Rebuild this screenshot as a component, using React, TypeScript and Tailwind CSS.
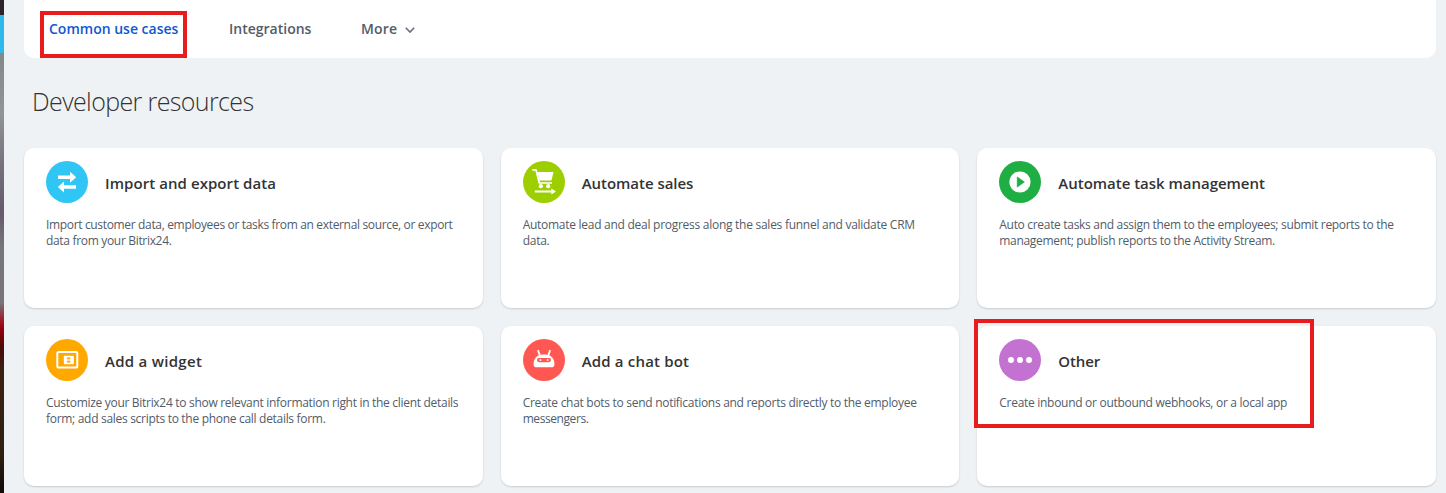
import type { ReactNode } from 'react';

type Card = {
  title: string;
  titleClass: string;
  lines: { text: string; className: string }[];
  color: string;
  icon: ReactNode;
  highlighted?: boolean;
};

const cards: Card[] = [
  {
    title: 'Import and export data',
    titleClass: 'tracking-[0.07px]',
    lines: [
      { text: 'Import customer data, employees or tasks from an external source, or export', className: 'tracking-[-0.34px]' },
      { text: 'data from your Bitrix24.', className: 'tracking-[-0.32px]' },
    ],
    color: 'bg-[#2fc6f6]',
    icon: (
      <path
        fill="#fff"
        d="M12 14.4H24V10.7L30.2 16.2L24 21.7V18H12ZM30 24.2H18V20.4L11.8 25.9L18 31.5V27.7H30Z"
      />
    ),
  },
  {
    title: 'Automate sales',
    titleClass: 'tracking-[-0.03px]',
    lines: [
      { text: 'Automate lead and deal progress along the sales funnel and validate CRM', className: 'tracking-[-0.27px]' },
      { text: 'data.', className: 'tracking-[-0.27px]' },
    ],
    color: 'bg-[#9dcf00]',
    icon: (
      <>
        <path d="M9.3 8.8H13L16.3 22H29" fill="none" stroke="#fff" strokeWidth="1.7" strokeLinejoin="round" />
        <path d="M14.3 11H30.6L28.4 19.6H16.4Z" fill="#fff" />
        <circle cx="17.8" cy="25.2" r="2.1" fill="#fff" />
        <circle cx="25.2" cy="25.2" r="2.1" fill="#fff" />
        <path d="M11.8 29.4H28.3V27.4L33 30.4L28.3 33.4V31.4H11.8Z" fill="#fff" />
      </>
    ),
  },
  {
    title: 'Automate task management',
    titleClass: 'tracking-[-0.02px]',
    lines: [
      { text: 'Auto create tasks and assign them to the employees; submit reports to the', className: 'tracking-[-0.31px]' },
      { text: 'management; publish reports to the Activity Stream.', className: 'tracking-[-0.32px]' },
    ],
    color: 'bg-[#1fae43]',
    icon: (
      <>
        <circle cx="21" cy="21" r="10.6" fill="#fff" />
        <path d="M18.3 16L25.3 21L18.3 26Z" fill="#1fae43" stroke="#1fae43" strokeWidth="0.8" strokeLinejoin="round" />
      </>
    ),
  },
  {
    title: 'Add a widget',
    titleClass: 'tracking-[0.28px]',
    lines: [
      { text: 'Customize your Bitrix24 to show relevant information right in the client details', className: 'tracking-[-0.3px]' },
      { text: 'form; add sales scripts to the phone call details form.', className: 'tracking-[-0.3px]' },
    ],
    color: 'bg-[#ffa900]',
    icon: (
      <>
        <rect x="11.3" y="13" width="20" height="15.6" rx="1.6" fill="none" stroke="#fff" strokeWidth="2" />
        <rect x="17.8" y="16.8" width="10" height="8.4" rx="0.8" fill="#fff" />
        <path d="M20.8 18.6H24.4V20.2H20.8ZM20.8 21.8H24.4V23.4H20.8Z" fill="#ffa900" />
      </>
    ),
  },
  {
    title: 'Add a chat bot',
    titleClass: 'tracking-[0.18px]',
    lines: [
      { text: 'Create chat bots to send notifications and reports directly to the employee', className: 'tracking-[-0.29px]' },
      { text: 'messengers.', className: 'tracking-[-0.42px]' },
    ],
    color: 'bg-[#ff5752]',
    icon: (
      <>
        <path d="M15.2 11.8L17 17M26.9 11.8L25.1 17" stroke="#fff" strokeWidth="1.9" strokeLinecap="round" />
        <path d="M21 15.4C26.6 15.4 29.6 17.4 30.9 21.6C31.8 24.6 31.8 28.2 29.4 28.2H12.6C10.2 28.2 10.2 24.6 11.1 21.6C12.4 17.4 15.4 15.4 21 15.4Z" fill="#fff" />
        <rect x="14" y="19" width="14" height="4.2" rx="2.1" fill="#ff5752" />
        <circle cx="17.4" cy="21.1" r="1" fill="#fff" />
        <circle cx="24.6" cy="21.1" r="1" fill="#fff" />
      </>
    ),
  },
  {
    title: 'Other',
    titleClass: 'tracking-[-0.1px]',
    lines: [{ text: 'Create inbound or outbound webhooks, or a local app', className: 'tracking-[-0.29px]' }],
    color: 'bg-[#c472d2]',
    icon: (
      <>
        <circle cx="12" cy="21" r="3" fill="#fff" />
        <circle cx="21" cy="21" r="3" fill="#fff" />
        <circle cx="30" cy="21" r="3" fill="#fff" />
      </>
    ),
    highlighted: true,
  },
];

function ResourceCard({ card }: { card: Card }) {
  return (
    <article className="relative h-40 rounded-[10px] bg-white px-[22px] pt-[13px] shadow-[0_1px_2px_rgba(0,0,0,0.16)]">
      <header className="flex items-center gap-[17px]">
        <span className={`size-[42px] shrink-0 rounded-full ${card.color}`}>
          <svg viewBox="0 0 42 42" className="size-[42px]">{card.icon}</svg>
        </span>
        <h2 className={`pt-0.5 text-[15px] leading-5 font-semibold whitespace-nowrap text-[#333] ${card.titleClass}`}>
          {card.title}
        </h2>
      </header>
      <p className="mt-[14px] text-xs leading-4 text-[#525c69]">
        {card.lines.map((line) => (
          <span key={line.text} className={`block whitespace-nowrap ${line.className}`}>
            {line.text}
          </span>
        ))}
      </p>
      {card.highlighted && (
        <div className="pointer-events-none absolute top-[-7px] left-[-3px] h-[109px] w-[340px] border-4 border-[#e81c1c]" />
      )}
    </article>
  );
}

export default function App() {
  return (
    <div className="flex h-[493px] w-[1446px] overflow-hidden bg-[#eef2f4] font-['Open_Sans',sans-serif]">
      <aside className="flex w-1 shrink-0 flex-col">
        <div className="h-[15px] bg-[#2b2428]" />
        <div className="h-[38px] bg-[#2fb9ea]" />
        <div className="flex-1 bg-[linear-gradient(180deg,#858888_0px,#929497_60px,#74707a_115px,#66596b_160px,#77777b_195px,#77747a_250px,#9c1825_268px,#900008_277px,#4a0b0b_295px,#3a2012_320px,#302010_400px,#100b09_440px)]" />
      </aside>
      <main className="flex-1 pr-[10px] pl-5">
        <nav className="flex h-[58px] items-start rounded-b-[10px] bg-white pt-[19px] pl-[25px] text-[14px] leading-5 font-semibold text-[#525c69]">
          <div className="relative w-[180px]">
            <a className="tracking-normal whitespace-nowrap text-[#1058d0]">Common use cases</a>
            <div className="pointer-events-none absolute top-[-8px] left-[-9px] h-[47px] w-[147px] border-4 border-[#e81c1c]" />
          </div>
          <a className="w-[132px]">Integrations</a>
          <a className="flex items-center gap-[7px] tracking-[0.2px]">
            More
            <svg viewBox="0 0 12 12" className="mt-0.5 size-3" fill="none" stroke="#68717c" strokeWidth="1.6">
              <path d="M1.8 3.8L6 8L10.2 3.8" />
            </svg>
          </a>
        </nav>
        <h1 className="mt-[26px] ml-2 text-[25px] leading-[34px] font-light tracking-[-0.62px] text-[#333]">
          Developer resources
        </h1>
        <section className="mt-[30px] grid grid-cols-3 gap-[18px]">
          {cards.map((card) => (
            <ResourceCard key={card.title} card={card} />
          ))}
        </section>
      </main>
    </div>
  );
}
